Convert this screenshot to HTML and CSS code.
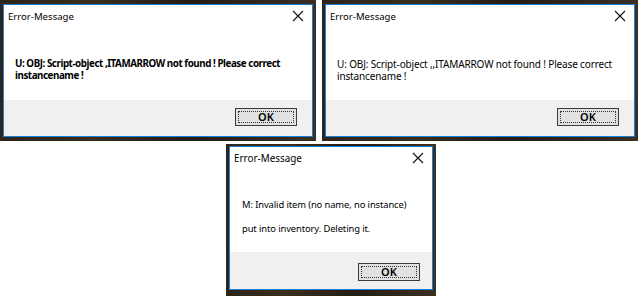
FILE: index.html
```html
<!DOCTYPE html>
<html>
<head>
<meta charset="utf-8">
<link rel="stylesheet" href="styles.css">
</head>
<body>
<div class="page">
  <div class="row-top">
    <div class="frame frame-wide">
      <div class="window">
        <div class="titlebar">
          <span class="title">Error-Message</span>
          <svg class="close" width="12" height="12" viewBox="0 0 12 12"><path d="M1 1L11 11M11 1L1 11" stroke="#111" stroke-width="1.1"/></svg>
        </div>
        <div class="content content-wide">
          <p class="msg msg-bold">U: OBJ: Script-object ,ITAMARROW not found ! Please correct instancename !</p>
        </div>
        <div class="footer">
          <div class="btn"><span class="focus">OK</span></div>
        </div>
      </div>
    </div>
    <div class="frame frame-wide">
      <div class="window">
        <div class="titlebar">
          <span class="title">Error-Message</span>
          <svg class="close" width="12" height="12" viewBox="0 0 12 12"><path d="M1 1L11 11M11 1L1 11" stroke="#111" stroke-width="1.1"/></svg>
        </div>
        <div class="content content-wide">
          <p class="msg">U: OBJ: Script-object ,,ITAMARROW not found ! Please correct instancename !</p>
        </div>
        <div class="footer">
          <div class="btn"><span class="focus">OK</span></div>
        </div>
      </div>
    </div>
  </div>
  <div class="row-bottom">
    <div class="frame frame-small">
      <div class="window">
        <div class="titlebar">
          <span class="title title-small">Error-Message</span>
          <svg class="close" width="12" height="12" viewBox="0 0 12 12"><path d="M1 1L11 11M11 1L1 11" stroke="#111" stroke-width="1.1"/></svg>
        </div>
        <div class="content content-small">
          <p class="msg msg-small">M: Invalid item (no name, no instance)</p>
          <p class="msg msg-small msg-gap">put into inventory. Deleting it.</p>
        </div>
        <div class="footer footer-small">
          <div class="btn"><span class="focus">OK</span></div>
        </div>
      </div>
    </div>
  </div>
</div>
</body>
</html>
```
FILE: styles.css
```css
html, body {
  margin: 0;
  padding: 0;
  background: #ffffff;
}
.page {
  width: 640px;
  height: 296px;
  overflow: hidden;
  font-family: "Noto Sans", "Open Sans", sans-serif;
  color: #000;
}
.row-top {
  display: flex;
  gap: 6px;
}
.row-bottom {
  display: flex;
  padding-left: 226px;
  margin-top: 3px;
}
.frame {
  background: linear-gradient(90deg, #2e2419 0%, #3a2d1e 30%, #231c14 60%, #3b2f21 100%);
  padding: 4px 3px 4px 3px;
  box-sizing: border-box;
}
.frame-wide {
  width: 316px;
  height: 141px;
}
.frame-small {
  width: 210px;
  height: 152px;
  padding: 2px 3px 6px 3px;
}
.window {
  border: 1px solid #1a7fd6;
  background: #ffffff;
  height: 100%;
  box-sizing: border-box;
  display: flex;
  flex-direction: column;
}
.titlebar {
  height: 22px;
  display: flex;
  align-items: center;
  justify-content: space-between;
  padding: 0 8px 0 4px;
  flex: none;
}
.title {
  font-size: 9.6px;
}
.title-small {
  font-size: 9.9px;
}
.close {
  display: block;
}
.content {
  flex: 1;
}
.content-wide {
  padding: 31px 10px 0 11px;
}
.content-small {
  padding: 30px 10px 0 12px;
}
.msg {
  margin: 0;
  font-size: 10px;
  line-height: 12px;
  letter-spacing: -0.15px;
}
.msg-bold {
  font-weight: 700;
  font-size: 9.8px;
  letter-spacing: -0.45px;
}
.msg-small {
  font-size: 9.4px;
  letter-spacing: -0.1px;
}
.msg-gap {
  margin-top: 12px;
}
.footer {
  height: 36px;
  background: #f0f0f0;
  display: flex;
  justify-content: flex-end;
  align-items: flex-start;
  padding: 8px 15px 0 0;
  box-sizing: border-box;
  flex: none;
}
.footer-small {
  height: 37px;
  padding: 11px 12px 0 0;
}
.btn {
  width: 62px;
  height: 18px;
  box-sizing: border-box;
  border: 1px solid #3c3c3c;
  background: #e1e1e1;
  padding: 2px;
  display: flex;
}
.focus {
  flex: 1;
  border: 1px dotted #333;
  display: flex;
  align-items: center;
  justify-content: center;
  font-size: 11px;
  font-weight: 600;
  line-height: 10px;
}
```
